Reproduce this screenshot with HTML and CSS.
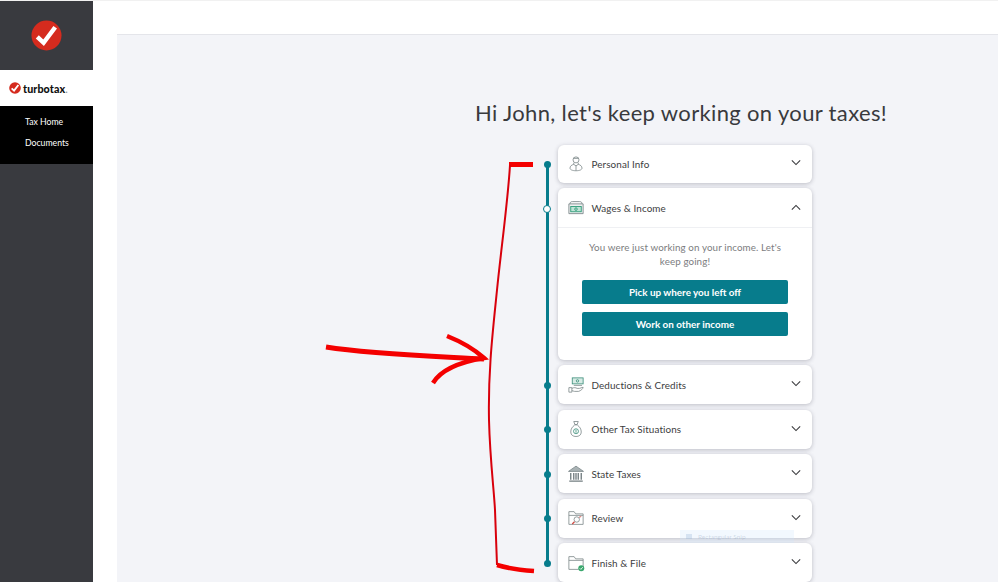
FILE: index.html
```html
<!DOCTYPE html>
<html lang="en">
<head>
<meta charset="utf-8">
<title>TurboTax</title>
<link rel="stylesheet" href="styles.css">
</head>
<body>
<div class="app">
  <aside class="sidebar">
    <div class="brand-top">
      <svg class="mark" viewBox="0 0 32 32"><circle cx="16" cy="16" r="15.5" fill="#d52b1e"/><path d="M6.5 17.5 L13 23.5 L25 7.5" fill="none" stroke="#fff" stroke-width="4.6"/></svg>
    </div>
    <div class="brand-band">
      <svg class="mark-small" viewBox="0 0 32 32"><circle cx="16" cy="16" r="15.5" fill="#d52b1e"/><path d="M7 17 L13.500 23 L25 8" fill="none" stroke="#fff" stroke-width="5"/></svg>
      <span class="wordmark">turbotax<span class="wordmark-dot">.</span></span>
    </div>
    <nav class="nav">
      <a class="nav-link">Tax Home</a>
      <a class="nav-link">Documents</a>
    </nav>
  </aside>
  <main class="main">
    <div class="topbar"></div>
    <section class="content">
      <h1 class="title">Hi John, let's keep working on your taxes!</h1>
      <div class="steps">
        <div class="line"></div>

        <div class="step">
          <span class="dot dot-first"></span>
          <div class="card">
            <div class="card-head card-head-first">
              <svg class="icon" viewBox="0 0 24 24" fill="none" stroke="#7f8a8c" stroke-width="1.100"><circle cx="12" cy="6.500" r="4"/><path d="M8.500 4.500h7M9 10.500v2l3 2 3-2v-2M9 12.500c-3 .7-5 2.500-5 5 0 2 3 3.500 8 3.500s8-1.500 8-3.500c0-2.500-2-4.300-5-5M12 14.500v6"/></svg>
              <span class="label">Personal Info</span>
              <svg class="chev" viewBox="0 0 12 8"><path d="M1 1.500 L6 6.500 L11 1.500"/></svg>
            </div>
          </div>
        </div>

        <div class="step">
          <span class="dot dot-open"></span>
          <div class="card">
            <div class="card-head card-head-open">
              <svg class="icon" viewBox="0 0 24 24" fill="none" stroke="#7f8a8c" stroke-width="1.200"><path d="M4 6.500c0-2 1-3 3-3h10c2 0 3 1 3 3"/><path d="M2.500 6.500h19v13h-19z" fill="#eef1f1"/><rect x="5" y="10" width="14" height="7" fill="#bfe3d6" stroke="#2f9c78"/><circle cx="12" cy="13.500" r="1.700" stroke="#2f9c78"/></svg>
              <span class="label">Wages &amp; Income</span>
              <svg class="chev" viewBox="0 0 12 8"><path d="M1 6.500 L6 1.500 L11 6.500"/></svg>
            </div>
            <div class="card-body">
              <p class="msg">You were just working on your income. Let's keep going!</p>
              <button class="btn">Pick up where you left off</button>
              <button class="btn">Work on other income</button>
            </div>
          </div>
        </div>

        <div class="step">
          <span class="dot"></span>
          <div class="card">
            <div class="card-head">
              <svg class="icon" viewBox="0 0 24 24" fill="none" stroke="#7f8a8c" stroke-width="1.100"><rect x="7" y="2.500" width="14.500" height="8" fill="#d7ebe5" stroke="#3d8f7b"/><circle cx="14" cy="6.500" r="1.600" stroke="#3d8f7b"/><path d="M9 12.500h11M2.500 15.500h4v6h-4zM6.500 16.500c3-1.500 5-1 7 0h3l5-1.500c0 2-3 4.500-6 5.500H10l-3.500-1"/></svg>
              <span class="label">Deductions &amp; Credits</span>
              <svg class="chev" viewBox="0 0 12 8"><path d="M1 1.500 L6 6.500 L11 1.500"/></svg>
            </div>
          </div>
        </div>

        <div class="step">
          <span class="dot"></span>
          <div class="card">
            <div class="card-head">
              <svg class="icon" viewBox="0 0 24 24" fill="none" stroke="#7f8a8c" stroke-width="1.100"><path d="M9 2h6l-1.500 4h-3zM10 6.500h4M10 7c-3 2-5 5-5 9 0 4 3 6 7 6s7-2 7-6c0-4-2-7-5-9"/><circle cx="12" cy="15" r="3.300" stroke="#3d8f7b"/><path d="M12 13v4" stroke="#3d8f7b"/></svg>
              <span class="label">Other Tax Situations</span>
              <svg class="chev" viewBox="0 0 12 8"><path d="M1 1.500 L6 6.500 L11 1.500"/></svg>
            </div>
          </div>
        </div>

        <div class="step">
          <span class="dot"></span>
          <div class="card">
            <div class="card-head">
              <svg class="icon" viewBox="0 0 24 24" fill="#a9b2b4" stroke="#727d80" stroke-width="1"><path d="M12 1.500 L22 8.500H2z"/><path d="M3 21.500h18M5 10.500v9M9 10.500v9M15 10.500v9M19 10.500v9M12 10.500v9" stroke-width="1.800"/></svg>
              <span class="label">State Taxes</span>
              <svg class="chev" viewBox="0 0 12 8"><path d="M1 1.500 L6 6.500 L11 1.500"/></svg>
            </div>
          </div>
        </div>

        <div class="step">
          <span class="dot"></span>
          <div class="card">
            <div class="card-head">
              <svg class="icon" viewBox="0 0 24 24" fill="none" stroke="#7f8a8c" stroke-width="1.100"><path d="M2.500 20.500V3.500h7l2 3h10v14z"/><path d="M2.500 8.500h19"/><circle cx="13" cy="14" r="3.600"/><path d="M10 17l-3 3" stroke="#d0473f" stroke-width="1.600"/><path d="M16 11l3-1" stroke="#d0473f"/></svg>
              <span class="label">Review</span>
              <svg class="chev" viewBox="0 0 12 8"><path d="M1 1.500 L6 6.500 L11 1.500"/></svg>
            </div>
          </div>
        </div>

        <div class="step">
          <span class="dot"></span>
          <div class="card">
            <div class="card-head">
              <svg class="icon" viewBox="0 0 24 24" fill="none" stroke="#7f8a8c" stroke-width="1.100"><path d="M2.500 20.500V3.500h7l2 3h10v11"/><path d="M2.500 8.500h19M2.500 20.500h13"/><circle cx="19" cy="19" r="4" fill="#3aa76d" stroke="none"/><path d="M17 19l1.500 1.500 2.500-3" stroke="#fff"/></svg>
              <span class="label">Finish &amp; File</span>
              <svg class="chev" viewBox="0 0 12 8"><path d="M1 1.500 L6 6.500 L11 1.500"/></svg>
            </div>
          </div>
        </div>

        <div class="ghost"><span class="ghost-box"></span><span class="ghost-text">Rectangular Snip</span></div>
      </div>
    </section>
  </main>
</div>
<svg class="ink" viewBox="0 0 998 582" fill="none" stroke="#f40000" stroke-linecap="butt">
  <path d="M533 164.500 H509" stroke-width="5"/>
  <path d="M510 165 C508 200 501 250 497 290 C493 330 488 370 489 420 C490 460 494 490 495 510 L497 565" stroke-width="2" stroke="#d8000c"/>
  <path d="M497 565 C510 569 520 570 534 571" stroke-width="4.500"/>
  <path d="M326 347 C370 354 430 356 484 359" stroke-width="5"/>
  <path d="M447 336 C462 342 474 349 484 358 C466 361 442 368 433 383" stroke-width="4.500"/>
</svg>
</body>
</html>
```

FILE: styles.css
```css
* { box-sizing: border-box; }
html, body { margin: 0; height: 100%; overflow: hidden; background: #fff; }
body { font-family: "Lato", "Liberation Sans", sans-serif; color: #393a3d; position: relative; }

.app { display: flex; height: 582px; border-top: 1px solid #f1f1f1; }

.sidebar { width: 93px; flex: none; background: #393a3f; display: flex; flex-direction: column; }
.brand-top { height: 69px; display: flex; align-items: center; justify-content: center; }
.mark { width: 31px; height: 31px; margin-top: -1px; }
.brand-band { height: 36px; background: #fff; display: flex; align-items: center; padding-left: 9px; gap: 2px; }
.mark-small { width: 12px; height: 12px; }
.wordmark { font-size: 10.700px; font-weight: 900; color: #111; letter-spacing: 0.1px; }
.wordmark-dot { color: #8a8a8a; font-weight: 400; }
.nav { height: 58px; background: #000; display: flex; flex-direction: column; padding: 10px 0 0 25px; gap: 10px; }
.nav-link { font-size: 8.700px; line-height: 11px; color: #fff; }

.main { flex: 1; min-width: 0; display: flex; flex-direction: column; }
.topbar { height: 33px; flex: none; background: #fff; }
.content { flex: 1; margin-left: 24px; background: #f3f4f8; border-top: 1px solid #e4e5ea; padding-top: 62.500px; overflow: hidden; }
.title { margin: 0 0 17.500px 358px; width: 412px; font-size: 22px; line-height: 30px; font-weight: 400; letter-spacing: 0.35px; white-space: nowrap; color: #393a3d; }

.steps { position: relative; margin-left: 441px; width: 254px; display: flex; flex-direction: column; gap: 5.500px; }
.line { position: absolute; left: -12.500px; top: 19px; height: 399px; width: 3px; background: #077c8c; }
.step { position: relative; }
.dot { position: absolute; left: -14.500px; top: 16.500px; width: 7px; height: 7px; border-radius: 50%; background: #077c8c; }
.dot-first { top: 15.500px; }
.dot-open { top: 17px; width: 8px; height: 8px; left: -15px; background: #fff; border: 1px solid #077c8c; }

.card { background: #fff; border-radius: 6px; box-shadow: 0 1px 4px rgba(60, 60, 80, 0.3); }
.card-head { height: 39px; display: flex; align-items: center; padding: 0 11px 0 9px; }
.card-head-first { height: 37.500px; }
.card-head-open { height: 40px; padding-top: 1px; border-bottom: 1px solid #eff0f3; }
.icon { width: 18px; height: 18px; flex: none; margin-right: 7px; margin-left: -0.500px; }
.label { flex: 1; font-size: 9.900px; letter-spacing: 0.1px; color: #3c3d40; }
.chev { width: 10px; height: 7px; flex: none; margin-top: -2px; fill: none; stroke: #393a3d; stroke-width: 1.300; }

.card-body { padding: 12px 24px 24px; display: flex; flex-direction: column; align-items: stretch; height: 131.500px; }
.msg { margin: 0 0 12px; font-size: 9.800px; line-height: 14px; text-align: center; color: #7c7d80; letter-spacing: 0.1px; }
.btn { height: 24px; margin-bottom: 8px; flex: none; border: 0; border-radius: 2px; background: #077c8c; color: #fff; font-family: inherit; font-size: 9.900px; font-weight: 700; padding: 0; }

.ghost { position: absolute; left: 122px; top: 385px; width: 114px; height: 13px; background: rgba(210, 230, 250, 0.28); display: flex; align-items: center; padding-left: 6px; gap: 6px; }
.ghost-box { width: 6px; height: 5px; background: rgba(150, 180, 215, 0.3); }
.ghost-text { font-size: 6.500px; color: rgba(120, 140, 170, 0.3); }

.ink { position: absolute; left: 0; top: 0; width: 998px; height: 582px; pointer-events: none; }
```
